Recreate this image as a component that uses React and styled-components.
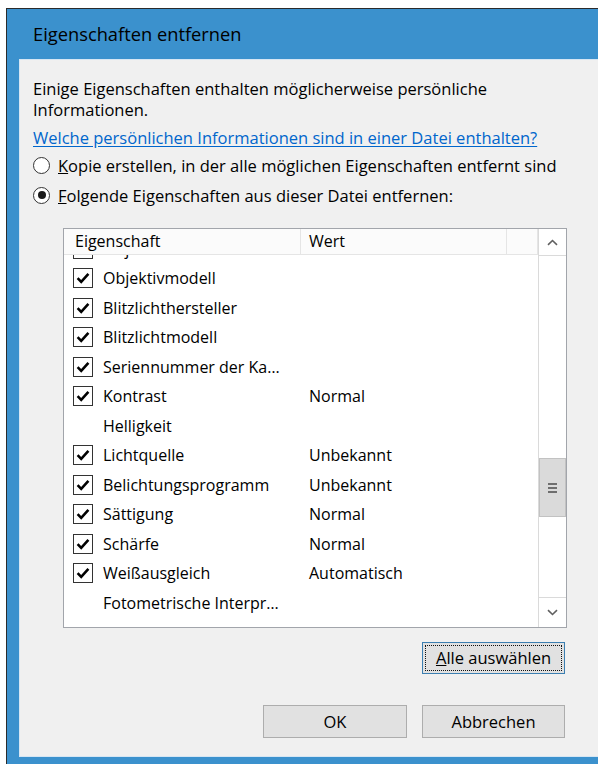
import React, { useLayoutEffect, useRef } from "react";
import styled, { createGlobalStyle } from "styled-components";

const GlobalStyle = createGlobalStyle`
  html, body { margin: 0; padding: 0; background: #ffffff; }
  body {
    font-family: "Open Sans", "Noto Sans", "Liberation Sans", sans-serif;
    color: #000;
  }
  * { box-sizing: border-box; }
`;

const FONT_SIZE = "16.5px";
const LIST_FONT_SIZE = "16px";

const Desktop = styled.div`
  width: 598px;
  height: 764px;
  padding: 8px 0 0 6px;
  overflow: hidden;
`;

const Window = styled.div`
  height: 756px;
  width: 592px;
  background: #3b91cd;
  border-top: 1px solid #2b2b2b;
  border-left: 1px solid #2b2b2b;
  display: flex;
  flex-direction: column;
  padding: 0 0 7px 12px;
`;

const TitleBar = styled.div`
  height: 50px;
  display: flex;
  align-items: center;
  padding-left: 14px;
  padding-bottom: 2px;
  font-size: 18.3px;
  color: #000;
`;

const Panel = styled.div`
  flex: 1;
  background: #f0f0f0;
  border: 1px solid #d6e6f3;
  border-right: none;
  display: flex;
  flex-direction: column;
  padding: 18px 0 0 13px;
  font-size: ${FONT_SIZE};
`;

const Intro = styled.p`
  margin: 0;
  line-height: 21px;
  width: 540px;
`;

const HelpLink = styled.a`
  margin-top: 7px;
  line-height: 21px;
  color: #0066cc;
  text-decoration: underline;
  text-underline-offset: 2px;
  cursor: pointer;
  align-self: flex-start;
`;

const OptionRow = styled.label`
  height: 30px;
  display: flex;
  align-items: center;
  gap: 8px;
  white-space: nowrap;
  margin-top: ${(p) => (p.$first ? "2px" : "0")};
`;

const RadioCircle = styled.span`
  width: 17px;
  height: 17px;
  border-radius: 50%;
  border: 1px solid #333;
  background: #fff;
  display: flex;
  align-items: center;
  justify-content: center;
  flex-shrink: 0;
  &::after {
    content: "";
    width: 8px;
    height: 8px;
    border-radius: 50%;
    background: #1a1a1a;
    display: ${(p) => (p.$checked ? "block" : "none")};
  }
`;

const ListBox = styled.div`
  margin: 18px 0 0 30px;
  width: 504px;
  height: 400px;
  border: 1px solid #a2a5ab;
  background: #fff;
  display: grid;
  grid-template-columns: 1fr 28px;
  overflow: hidden;
  font-size: ${LIST_FONT_SIZE};
`;

const ListMain = styled.div`
  display: flex;
  flex-direction: column;
  min-height: 0;
`;

const HeaderRow = styled.div`
  height: 26px;
  display: grid;
  grid-template-columns: 237px 206px 1fr;
  background: #fbfbfb;
  border-bottom: 1px solid #e5e5e5;
  flex-shrink: 0;
`;

const HeaderCell = styled.div`
  display: flex;
  align-items: center;
  padding-left: ${(p) => p.$pad}px;
  border-right: 1px solid #e5e5e5;
  padding-bottom: 1px;
`;

/* visible rows end a few pixels above the frame's lower edge */
const ListBody = styled.div`
  height: 363px;
  flex-shrink: 0;
  overflow: hidden;
`;

const Row = styled.div`
  height: 29.5px;
  display: grid;
  grid-template-columns: 237px 206px 1fr;
  align-items: center;
`;

const NameCell = styled.div`
  display: flex;
  align-items: center;
  gap: 10px;
  padding-left: 9px;
  white-space: nowrap;
`;

const ValueCell = styled.div`
  padding-left: 8px;
  white-space: nowrap;
`;

const Box = styled.span`
  width: 20px;
  height: 20px;
  border: 1px solid #333;
  background: #fff;
  display: flex;
  align-items: center;
  justify-content: center;
  flex-shrink: 0;
  visibility: ${(p) => (p.$hidden ? "hidden" : "visible")};
`;

const ScrollBar = styled.div`
  border-left: 1px solid #dadada;
  display: flex;
  flex-direction: column;
  background: #fff;
`;

const ArrowButton = styled.div`
  height: ${(p) => p.$h}px;
  display: flex;
  align-items: center;
  justify-content: center;
  flex-shrink: 0;
  border-top: ${(p) => (p.$down ? "1px solid #dadada" : "none")};
  border-bottom: ${(p) => (p.$down ? "none" : "1px solid #dadada")};
`;

const Track = styled.div`
  flex: 1;
  display: flex;
  flex-direction: column;
`;

const Thumb = styled.div`
  margin-top: ${(p) => p.$offset}px;
  height: ${(p) => p.$size}px;
  background: #dadada;
  border: 1px solid #c2c2c2;
  display: flex;
  flex-direction: column;
  align-items: center;
  justify-content: center;
  gap: 2px;
`;

const GripLine = styled.span`
  width: 9px;
  height: 2px;
  background: #6e6e6e;
`;

const ButtonRow = styled.div`
  display: flex;
  justify-content: flex-end;
  gap: 15px;
  width: 532px;
  margin-top: ${(p) => p.$gap}px;
`;

const DialogButton = styled.button`
  width: ${(p) => p.$w}px;
  height: ${(p) => p.$h}px;
  font-family: inherit;
  font-size: ${FONT_SIZE};
  color: #000;
  background: #e1e1e1;
  border: 1px solid ${(p) => (p.$focused ? "#3c7fb1" : "#adadad")};
  padding: 0 0 1px;
  position: relative;
  display: flex;
  align-items: center;
  justify-content: center;
  white-space: nowrap;
  &::after {
    content: "";
    display: ${(p) => (p.$focused ? "block" : "none")};
    position: absolute;
    inset: 2px;
    border: 1px dotted #111;
  }
`;

const Chevron = ({ down }) => (
  <svg width="11" height="7" viewBox="0 0 11 7">
    <path
      d={down ? "M1 1.2 L5.5 5.5 L10 1.2" : "M1 5.8 L5.5 1.5 L10 5.8"}
      fill="none"
      stroke="#606060"
      strokeWidth="1.6"
    />
  </svg>
);

const Check = () => (
  <svg width="16" height="16" viewBox="0 0 16 16">
    <path
      d="M2.6 8.2 L6.2 11.8 L13.4 3.8"
      fill="none"
      stroke="#000"
      strokeWidth="2.6"
    />
  </svg>
);

const properties = [
  { name: "Objektivhersteller", checked: true },
  { name: "Objektivmodell", checked: true },
  { name: "Blitzlichthersteller", checked: true },
  { name: "Blitzlichtmodell", checked: true },
  { name: "Seriennummer der Ka…", checked: true },
  { name: "Kontrast", value: "Normal", checked: true },
  { name: "Helligkeit" },
  { name: "Lichtquelle", value: "Unbekannt", checked: true },
  { name: "Belichtungsprogramm", value: "Unbekannt", checked: true },
  { name: "Sättigung", value: "Normal", checked: true },
  { name: "Schärfe", value: "Normal", checked: true },
  { name: "Weißausgleich", value: "Automatisch", checked: true },
  { name: "Fotometrische Interpr…" },
  { name: "Digitaler Zoom" },
  { name: "EXIF-Version" },
];

export default function App() {
  const bodyRef = useRef(null);

  // The list is shown scrolled a little past its first entry.
  useLayoutEffect(() => {
    if (bodyRef.current) bodyRef.current.scrollTop = 21;
  }, []);

  return (
    <>
      <GlobalStyle />
      <Desktop>
        <Window>
          <TitleBar>Eigenschaften entfernen</TitleBar>
          <Panel>
            <Intro>
              Einige Eigenschaften enthalten möglicherweise persönliche
              Informationen.
            </Intro>
            <HelpLink>Welche persönlichen Informationen sind in einer Datei enthalten?</HelpLink>
            <OptionRow $first>
              <RadioCircle />
              <span>
                <u>K</u>opie erstellen, in der alle möglichen Eigenschaften entfernt sind
              </span>
            </OptionRow>
            <OptionRow>
              <RadioCircle $checked />
              <span>
                <u>F</u>olgende Eigenschaften aus dieser Datei entfernen:
              </span>
            </OptionRow>

            <ListBox>
              <ListMain>
                <HeaderRow>
                  <HeaderCell $pad={11}>Eigenschaft</HeaderCell>
                  <HeaderCell $pad={8}>Wert</HeaderCell>
                  <HeaderCell $pad={0} />
                </HeaderRow>
                <ListBody ref={bodyRef}>
                  {properties.map((p) => (
                    <Row key={p.name}>
                      <NameCell>
                        <Box $hidden={!p.checked}>{p.checked && <Check />}</Box>
                        <span>{p.name}</span>
                      </NameCell>
                      <ValueCell>{p.value || ""}</ValueCell>
                    </Row>
                  ))}
                </ListBody>
              </ListMain>
              <ScrollBar>
                <ArrowButton $h={27}>
                  <Chevron />
                </ArrowButton>
                <Track>
                  <Thumb $offset={202} $size={59}>
                    <GripLine />
                    <GripLine />
                    <GripLine />
                  </Thumb>
                </Track>
                <ArrowButton $h={30} $down>
                  <Chevron down />
                </ArrowButton>
              </ScrollBar>
            </ListBox>

            <ButtonRow $gap={14}>
              <DialogButton $w={143} $h={32} $focused>
                <span>
                  <u>A</u>lle auswählen
                </span>
              </DialogButton>
            </ButtonRow>
            <ButtonRow $gap={31}>
              <DialogButton $w={144} $h={33}>OK</DialogButton>
              <DialogButton $w={143} $h={33}>Abbrechen</DialogButton>
            </ButtonRow>
          </Panel>
        </Window>
      </Desktop>
    </>
  );
}
